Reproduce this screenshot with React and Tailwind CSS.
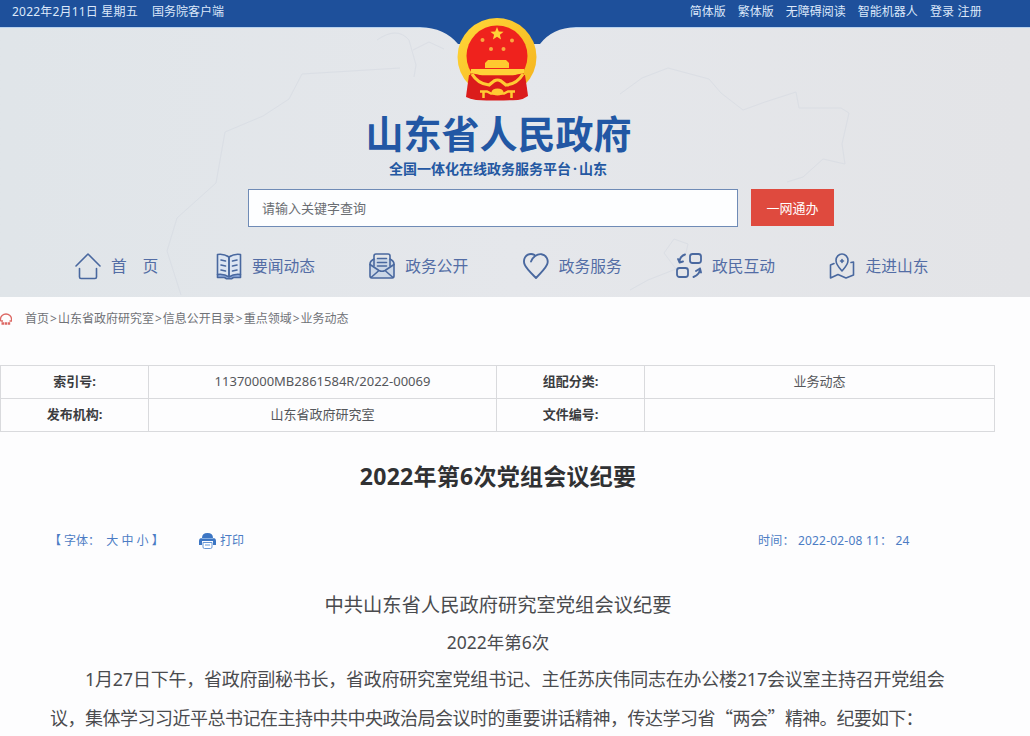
import React from 'react';

const Icon = ({ children }) => (
  <svg
    className="h-[28px] w-[26px] shrink-0 text-[#49689f]"
    viewBox="0 0 26 28"
    fill="none"
    stroke="currentColor"
    strokeWidth="1.6"
    strokeLinecap="round"
    strokeLinejoin="round"
  >
    {children}
  </svg>
);

const HomeIcon = () => (
  <Icon>
    <path d="M1 14 13 2l12 12M4.5 16.500V25q0 1.500 1.500 1.500h14q1.500 0 1.500-1.500v-8.500" />
  </Icon>
);

const BookIcon = () => (
  <Icon>
    <path d="M1.500 22.500v3h7l2 1.200h5l2-1.200h7v-3" fill="#8faadb" />
    <path d="M13 5Q8 1.500 1.500 2.500v20Q8 21.500 13 25q5-3.500 11.500-2.500v-20Q18 1.500 13 5zv20" fill="#dce5f2" />
    <path d="M13 5v19M5 8l4.500 1M5 13l4.500 1M5 18l4.500 1M21 8l-4.500 1M21 13l-4.500 1M21 18l-4.500 1" />
  </Icon>
);

const MailIcon = () => (
  <Icon>
    <path d="M5 7Q1 9 1 12v12q0 2 2 2h20q2 0 2-2V12q0-3-4-5" fill="#cbd7e7" />
    <path d="M5 14V4q0-2 2-2h12q2 0 2 2v10M8.500 6.500h9M8.500 10.500h9M8.500 14h9" />
    <path d="M1 12.500l9 6q3 1.500 6 0l9-6M2 25.500l8-7M24 25.500l-8-7" />
  </Icon>
);

const HeartIcon = () => (
  <Icon>
    <path
      d="M8 9.500C9.500 5.500 14 1.500 18.500 2.200c5 .8 7.500 6 5.500 10.500-2 4.300-7 9.300-11 13.300C9 22 3.500 17 1.700 12.700-.4 7.500 2.500 2 8 2q1.800 0 3.300.8"
      strokeWidth="1.9"
    />
  </Icon>
);

const ExchangeIcon = () => (
  <Icon>
    <rect x="14" y="2" width="11" height="9" rx="2.500" strokeWidth="1.800" />
    <rect x="1" y="16" width="11" height="9" rx="2.500" strokeWidth="1.800" />
    <path d="M9 2.500Q4 4 3.500 9.500M2 7l1.500 3.500L7 9.500" strokeWidth="1.900" />
    <path d="M24 16.500q0 6-6.500 8.500M20 19l4-2.500 1 4" strokeWidth="1.900" />
  </Icon>
);

const MapIcon = () => (
  <Icon>
    <path d="M13 19Q7 12.500 7 8.500a6 6.500 0 0 1 12 0Q19 12.500 13 19z" />
    <path d="M11.500 9h3M13 7.500v3" />
    <path d="M5 11.500l-3.500 1.500v13L9 22.500l8 3.500 7.500-3V10l-2.500.500" />
  </Icon>
);

const Emblem = () => (
  <svg className="-ml-[4px] h-[88px] w-[84px]" viewBox="0 0 84 88">
    <defs>
      <linearGradient id="gold" x1="0" y1="0" x2="1" y2="1">
        <stop offset="0" stopColor="#ffd739" />
        <stop offset="1" stopColor="#f5b21c" />
      </linearGradient>
    </defs>
    <ellipse cx="42" cy="42" rx="39.500" ry="39" fill="url(#gold)" />
    <path d="M14 60q-2 14-3 22 4 2 10 3 21 1 42 0 6-1 10-4-1-8-3-21z" fill="#db1c1b" />
    <circle cx="42" cy="41" r="30.500" fill="#ef221d" />
    <path d="M42 12l1.800 4.500 4.800.300-3.700 3 1.200 4.700-4.100-2.700-4.100 2.700 1.200-4.700-3.700-3 4.800-.3z" fill="#ffd238" />
    <g fill="#f9a840">
      <circle cx="27.500" cy="25" r="2" />
      <circle cx="57" cy="25.500" r="2" />
      <circle cx="36" cy="34" r="2" />
      <circle cx="48.500" cy="34" r="2" />
    </g>
    <path d="M33 45h18l3 3v5H30v-5z" fill="#ffc92f" />
    <path d="M16 54h53v4l-11 2.500H27L16 58z" fill="#ffd238" />
    <path d="M15 58.500l12 2h31l11-2-3 14H18z" fill="#db1c1b" />
    <path d="M17 59q6 10 17 11l5-4q3.500-2 7 0l5 4q11-1 17-11" fill="none" stroke="#ffcb33" strokeWidth="3.200" />
    <path d="M25 76.500h7l4 2h13l4-2h7M28.500 77v6M56.500 77v6" fill="none" stroke="#ffcb33" strokeWidth="2.500" />
    <ellipse cx="42.500" cy="77" rx="6" ry="3.500" fill="#ffcb33" />
  </svg>
);

const RegionMap = () => (
  <svg className="absolute inset-0 h-full w-full" viewBox="0 0 1030 297" fill="none" stroke="#d3d8e1" strokeWidth="1" opacity=".5">
    <path d="M377 40q20-14 32 0l7 25-2 12M413 50l16-8 15 7M400 68l-98 6-13 25-26 17-38 16-9 51-39 35-10 33 14 44" />
    <path d="M620 94l22-16 26-10 41 11 12 14 22 17 22-8 31-10 3 16h42l8 5-7 31 3 20-22-5-20 18-16 5" />
    <path d="M630 290l18-10 28-11-12-16 10-14 14 5-3 13" />
  </svg>
);

const navItems = [
  { label: '首　页', icon: HomeIcon },
  { label: '要闻动态', icon: BookIcon },
  { label: '政务公开', icon: MailIcon },
  { label: '政务服务', icon: HeartIcon },
  { label: '政民互动', icon: ExchangeIcon },
  { label: '走进山东', icon: MapIcon },
];

const TopBar = () => (
  <div className="flex h-[27px] justify-between bg-[#1e509b] pr-12 pl-3 text-xs leading-[23px] whitespace-nowrap text-[#dce8fa]">
    <div className="flex gap-3.5">
      <span className="w-[126px] tracking-[0.200px]">2022年2月11日 星期五</span>
      <span>国务院客户端</span>
    </div>
    <div className="flex gap-3">
      <span>简体版</span>
      <span>繁体版</span>
      <span>无障碍阅读</span>
      <span>智能机器人</span>
      <span className="tracking-[0.2px]">登录 注册</span>
    </div>
  </div>
);

const Header = () => (
  <header className="relative h-[297px] bg-linear-to-r from-[#e0e5e9] via-[#e5e7eb] to-[#e3e4e7]">
    <RegionMap />
    <div className="relative">
      <TopBar />
      <div className="h-px bg-[#b9d2ee]"></div>
      <svg className="absolute top-[27px] left-[420px] h-6 w-[156px]" viewBox="0 0 156 24">
        <path d="M0 0h156q-24 1-36 17H38Q25 1 0 0z" fill="#1e509b" />
      </svg>
      <div className="relative -mt-[13px] flex flex-col items-center pr-8">
        <Emblem />
        <h1 className="mt-[4px] -ml-px text-[38px] leading-[52px] font-bold text-[#2257a4]">山东省人民政府</h1>
        <p className="-ml-[2px] flex text-sm leading-[20px] font-bold text-[#2458a2]">
          <span>全国一体化在线政务服务平台</span>
          <span className="w-2 text-center">·</span>
          <span>山东</span>
        </p>
      </div>
      <div className="mt-[10px] flex gap-[13px] pl-[248px]">
        <div className="flex h-[38px] w-[490px] items-center border border-[#6f8bb6] bg-[#fdfeff] pt-0.5 pl-[13px] text-[13px] text-[#6a6d72]">
          请输入关键字查询
        </div>
        <div className="flex h-[37px] w-[83px] items-center justify-center bg-[#df4a3e] pt-0.5 text-[13px] text-white">
          一网通办
        </div>
      </div>
      <nav className="mt-[24px] flex gap-[54.400px] pl-[75px]">
        {navItems.map(({ label, icon: ItemIcon }) => (
          <div
            key={label}
            className="flex items-center gap-2.5 text-[15.750px] leading-[30px] whitespace-nowrap text-[#536da5] first:w-[86.500px]"
          >
            <ItemIcon />
            <span>{label}</span>
          </div>
        ))}
      </nav>
    </div>
  </header>
);

const crumbs = ['首页', '山东省政府研究室', '信息公开目录', '重点领域', '业务动态'];

const Breadcrumb = () => (
  <div className="flex h-[44px] items-center text-xs text-[#707277]">
    <svg className="mr-[13px] h-3 w-3" viewBox="0 0 12 12" fill="none" stroke="#dc6864" strokeWidth="1.300">
      <path d="M.5 8V6a5.500 5 0 0 1 11 0v2H9.500M.5 8H3" />
      <path d="M1.500 10.500h9" strokeWidth="2.500" strokeDasharray="2.500 .6" />
    </svg>
    {crumbs.map((name, i) => (
      <React.Fragment key={name}>
        {i > 0 && <span className="mx-px">&gt;</span>}
        <span>{name}</span>
      </React.Fragment>
    ))}
  </div>
);

const InfoTable = () => (
  <div className="mt-6 grid w-[995px] grid-cols-[148px_348px_148px_350px] border-t border-l border-[#d9dadd] text-center text-[13px] leading-[31px] text-[#55575b] [&>div]:h-[33px] [&>div]:border-r [&>div]:border-b [&>div]:border-[#d9dadd]">
    <div className="font-bold text-[#3b3c3f]">索引号:</div>
    <div>11370000MB2861584R/2022-00069</div>
    <div className="font-bold text-[#3b3c3f]">组配分类:</div>
    <div>业务动态</div>
    <div className="font-bold text-[#3b3c3f]">发布机构:</div>
    <div>山东省政府研究室</div>
    <div className="font-bold text-[#3b3c3f]">文件编号:</div>
    <div></div>
  </div>
);

const ArticleTools = () => (
  <div className="mt-[33px] flex h-[24px] items-center pl-[49px] text-xs whitespace-pre text-[#4c7cc4]">
    <span className="w-[150px]">【 字体：  大 中 小 】</span>
    <svg className="mr-1 h-[18px] w-[17px]" viewBox="0 0 17 18">
      <path d="M3 6q0-5 5.500-5T14 6q3 0 3 3v4h-3V9H3v4H0V9q0-3 3-3z" fill="#3c76c4" />
      <path d="M2.500 6.500h12" stroke="#88b0e2" />
      <path d="M4 10.500h9v4.500q0 1.500-1.500 1.500h-6Q4 16.500 4 15zM6 13h5" fill="#fff" stroke="#6797d5" />
    </svg>
    <span>打印</span>
    <span className="ml-auto w-[272px] tracking-[0.200px]">时间： 2022-02-08 11： 24</span>
  </div>
);

const App = () => {
  return (
    <div className="h-[736px] w-[1030px] overflow-hidden bg-[#fdfdfe] font-['Noto_Sans','Noto_Sans_CJK_SC',sans-serif]">
      <Header />
      <Breadcrumb />
      <InfoTable />
      <h2 className="mt-[24px] pr-[34px] text-center text-[23px] leading-[40px] font-bold tracking-[0.250px] text-[#303133]">
        2022年第6次党组会议纪要
      </h2>
      <ArticleTools />
      <article className="mt-[33px] text-lg leading-[37.700px] whitespace-nowrap text-[#4a4b4e]">
        <p className="pr-[34px] text-center text-[19.300px]">中共山东省人民政府研究室党组会议纪要</p>
        <p className="pr-[34px] text-center text-[17.500px]">2022年第6次</p>
        <p className="pl-[85px] tracking-[-0.240px]">
          1月27日下午，省政府副秘书长，省政府研究室党组书记、主任苏庆伟同志在办公楼217会议室主持召开党组会
        </p>
        <p className="pl-[50px] tracking-[-0.500px]">
          议，集体学习习近平总书记在主持中共中央政治局会议时的重要讲话精神，传达学习省
          <span className="font-['Noto_Sans_CJK_SC',sans-serif]">“两会”</span>
          <span className="tracking-[-0.800px]">精神。纪要如下：</span>
        </p>
      </article>
    </div>
  );
};

export default App;
